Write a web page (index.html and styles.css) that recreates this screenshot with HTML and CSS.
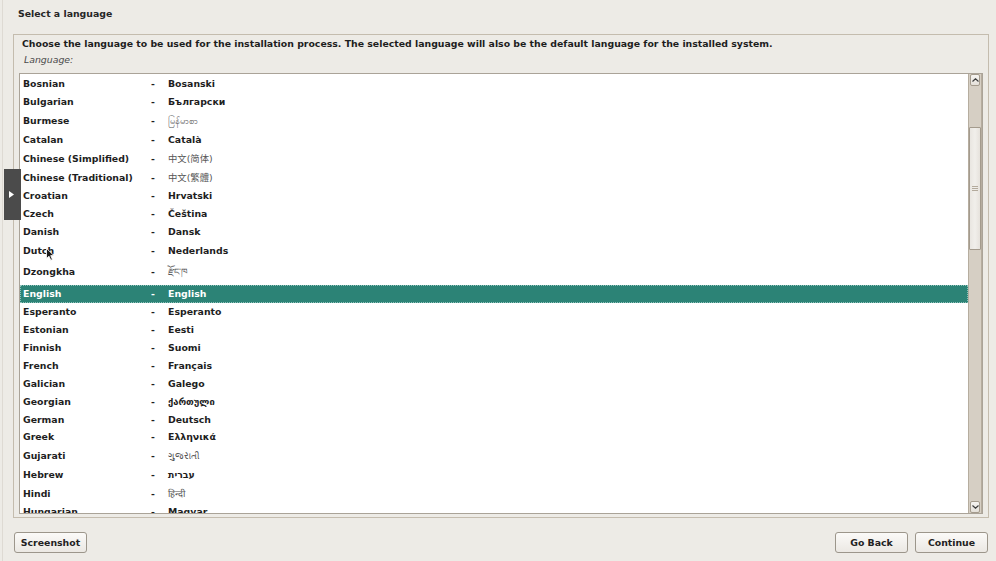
FILE: index.html
```html
<!DOCTYPE html>
<html lang="en">
<head>
  <meta charset="UTF-8">
  <title>Select a language</title>
  <link rel="stylesheet" href="styles.css">
</head>
<body>

  <div class="installer">
    <!-- Titel -->
    <h1 class="title">Select a language</h1>

    <!-- Hauptbereich -->
    <div class="panel">
      <p class="desc">Choose the language to be used for the installation process. The selected language will also be the default language for the installed system.</p>
      <div class="label">Language:</div>

      <div class="listbox">
        <div class="rows">
          <div class="row"><span>Bosnian</span><span>-</span><span>Bosanski</span></div>
          <div class="row"><span>Bulgarian</span><span>-</span><span>Български</span></div>
          <div class="row h20"><span>Burmese</span><span>-</span><span class="script">မြန်မာစာ</span></div>
          <div class="row"><span>Catalan</span><span>-</span><span>Català</span></div>
          <div class="row h20"><span>Chinese (Simplified)</span><span>-</span><span class="script cjk-sc">中文(简体)</span></div>
          <div class="row"><span>Chinese (Traditional)</span><span>-</span><span class="script cjk-tc">中文(繁體)</span></div>
          <div class="row"><span>Croatian</span><span>-</span><span>Hrvatski</span></div>
          <div class="row"><span>Czech</span><span>-</span><span>Čeština</span></div>
          <div class="row"><span>Danish</span><span>-</span><span>Dansk</span></div>
          <div class="row h20"><span>Dutch</span><span>-</span><span>Nederlands</span></div>
          <div class="row h24"><span>Dzongkha</span><span>-</span><span class="script">རྫོང་ཁ</span></div>
          <div class="row selected"><span>English</span><span>-</span><span>English</span></div>
          <div class="row"><span>Esperanto</span><span>-</span><span>Esperanto</span></div>
          <div class="row"><span>Estonian</span><span>-</span><span>Eesti</span></div>
          <div class="row"><span>Finnish</span><span>-</span><span>Suomi</span></div>
          <div class="row"><span>French</span><span>-</span><span>Français</span></div>
          <div class="row"><span>Galician</span><span>-</span><span>Galego</span></div>
          <div class="row"><span>Georgian</span><span>-</span><span>ქართული</span></div>
          <div class="row h17"><span>German</span><span>-</span><span>Deutsch</span></div>
          <div class="row"><span>Greek</span><span>-</span><span>Ελληνικά</span></div>
          <div class="row h19"><span>Gujarati</span><span>-</span><span class="script">ગુજરાતી</span></div>
          <div class="row h20"><span>Hebrew</span><span>-</span><span>עברית</span></div>
          <div class="row"><span>Hindi</span><span>-</span><span class="script">हिन्दी</span></div>
          <div class="row"><span>Hungarian</span><span>-</span><span>Magyar</span></div>
        </div>

        <!-- Scrollbalken -->
        <div class="scrollbar">
          <div class="arrow">
            <svg width="7" height="4" viewBox="0 0 7 4"><path d="M0.5 3.5 L3.5 0.8 L6.5 3.5" fill="none" stroke="#3c3c3c" stroke-width="1.2"/></svg>
          </div>
          <div class="trough">
            <div class="thumb">
              <div class="grip"></div>
            </div>
          </div>
          <div class="arrow">
            <svg width="7" height="4" viewBox="0 0 7 4"><path d="M0.5 0.5 L3.5 3.2 L6.5 0.5" fill="none" stroke="#3c3c3c" stroke-width="1.2"/></svg>
          </div>
        </div>
      </div>
    </div>

    <!-- Buttons unten -->
    <div class="buttons">
      <button class="btn">Screenshot</button>
      <div class="right">
        <button class="btn">Go Back</button>
        <button class="btn">Continue</button>
      </div>
    </div>
  </div>

  <!-- Seitenlasche links -->
  <div class="side-tab">
    <svg width="5" height="7" viewBox="0 0 5 7"><path d="M0 0 L5 3.5 L0 7 Z" fill="#ffffff"/></svg>
  </div>

  <!-- Mauszeiger -->
  <svg class="cursor" width="9" height="13" viewBox="0 0 9 13">
    <path d="M0.5 0.5 L0.5 10.5 L3 8.2 L4.8 12.2 L6.4 11.5 L4.7 7.6 L8 7.6 Z" fill="#1a1a1a" stroke="#ffffff" stroke-width="0.8"/>
  </svg>

</body>
</html>
```

FILE: styles.css
```css
/* Grundlayout */
body {
  margin: 0;
  padding: 0;
  background-color: #edebe6;
  font-family: "DejaVu Sans", "Noto Sans CJK SC", sans-serif;
  font-size: 9.35px;
  color: #1e1e1e;
  width: 996px;
  height: 561px;
  overflow: hidden;
  position: relative;
}

.installer {
  display: flex;
  flex-direction: column;
  height: 561px;
  box-sizing: border-box;
  border-left: 1px solid #dedad3;
  margin-left: 2px;
  padding: 0 7px 0 10px;
}

.title {
  margin: 0;
  padding: 8px 0 0 5px;
  font-size: 9.35px;
  line-height: 12px;
  font-weight: bold;
  color: #262626;
  height: 34px;
  box-sizing: border-box;
  flex-shrink: 0;
}

/* Rahmen um den Inhalt */
.panel {
  border: 1px solid #c4bcae;
  height: 484px;
  box-sizing: border-box;
  display: flex;
  flex-direction: column;
  flex-shrink: 0;
}

.desc {
  margin: 0;
  padding: 3px 0 0 8px;
  line-height: 12px;
  font-weight: bold;
}

.label {
  padding: 4px 0 0 10px;
  line-height: 12px;
  font-style: italic;
  color: #4a4a4a;
}

/* Liste */
.listbox {
  margin: 7px 5px 0 5px;
  height: 441px;
  border: 1px solid #aaa398;
  background-color: #ffffff;
  box-sizing: border-box;
  display: flex;
  overflow: hidden;
}

.rows {
  width: 950px;
  padding-top: 1px;
}

.row {
  display: grid;
  grid-template-columns: 128px 17px 1fr;
  padding-left: 3px;
  height: 18px;
  line-height: 18px;
  font-weight: bold;
  white-space: nowrap;
  box-sizing: border-box;
}

.row.h17 { height: 17px; line-height: 17px; }
.row.h19 { height: 19px; line-height: 19px; }
.row.h20 { height: 20px; line-height: 20px; }
.row.h24 { height: 24px; line-height: 22px; }

.row .script {
  font-weight: normal;
  color: #555555;
}

.row .cjk-sc {
  font-family: "DejaVu Sans", "Noto Sans CJK SC", sans-serif;
}

.row .cjk-tc {
  font-family: "DejaVu Sans", "Noto Sans CJK TC", sans-serif;
}

.row.selected {
  width: 948px;
  background-color: #2c8376;
  color: #ffffff;
  border: 1px dotted #8fc2ba;
  padding-left: 2px;
  line-height: 16px;
}

/* Scrollbalken */
.scrollbar {
  width: 12px;
  display: flex;
  flex-direction: column;
  background-color: #d6cfc4;
  border-left: 1px solid #b6ad9f;
  border-right: 1px solid #b6ad9f;
}

.arrow {
  height: 12px;
  margin: 0 1px;
  background: linear-gradient(#f6f4f1, #e4e0d9);
  border: 1px solid #a49b8d;
  border-radius: 2px;
  box-sizing: border-box;
  display: flex;
  justify-content: center;
  align-items: center;
}

.trough {
  flex: 1;
  padding-top: 41px;
  padding-bottom: 248px;
}

.thumb {
  height: 123px;
  background: linear-gradient(90deg, #e9e6e1, #f1efeb 50%, #e6e2dc);
  border: 1px solid #a49b8d;
  border-radius: 1px;
  box-sizing: border-box;
  display: flex;
  justify-content: center;
  align-items: center;
}

.grip {
  width: 6px;
  height: 5px;
  border-top: 1px solid #b3aa9c;
  border-bottom: 1px solid #b3aa9c;
  box-sizing: border-box;
  background: linear-gradient(#b3aa9c, #b3aa9c) center / 6px 1px no-repeat;
}

/* Buttons */
.buttons {
  display: flex;
  justify-content: space-between;
  padding: 14px 1px 0 1px;
}

.right {
  display: flex;
  gap: 7px;
}

.btn {
  width: 73px;
  height: 21px;
  font-family: "DejaVu Sans", sans-serif;
  font-size: 9.35px;
  font-weight: bold;
  color: #222222;
  background: linear-gradient(#fbfaf8, #ebe8e3);
  border: 1px solid #9c968b;
  border-radius: 3px;
  padding: 0;
}

/* Lasche am linken Rand */
.side-tab {
  position: absolute;
  left: 4px;
  top: 169px;
  width: 17px;
  height: 51px;
  background-color: #4b4b4b;
  display: flex;
  align-items: center;
  padding-left: 5px;
  box-sizing: border-box;
}

.cursor {
  position: absolute;
  left: 46px;
  top: 248px;
}
```
